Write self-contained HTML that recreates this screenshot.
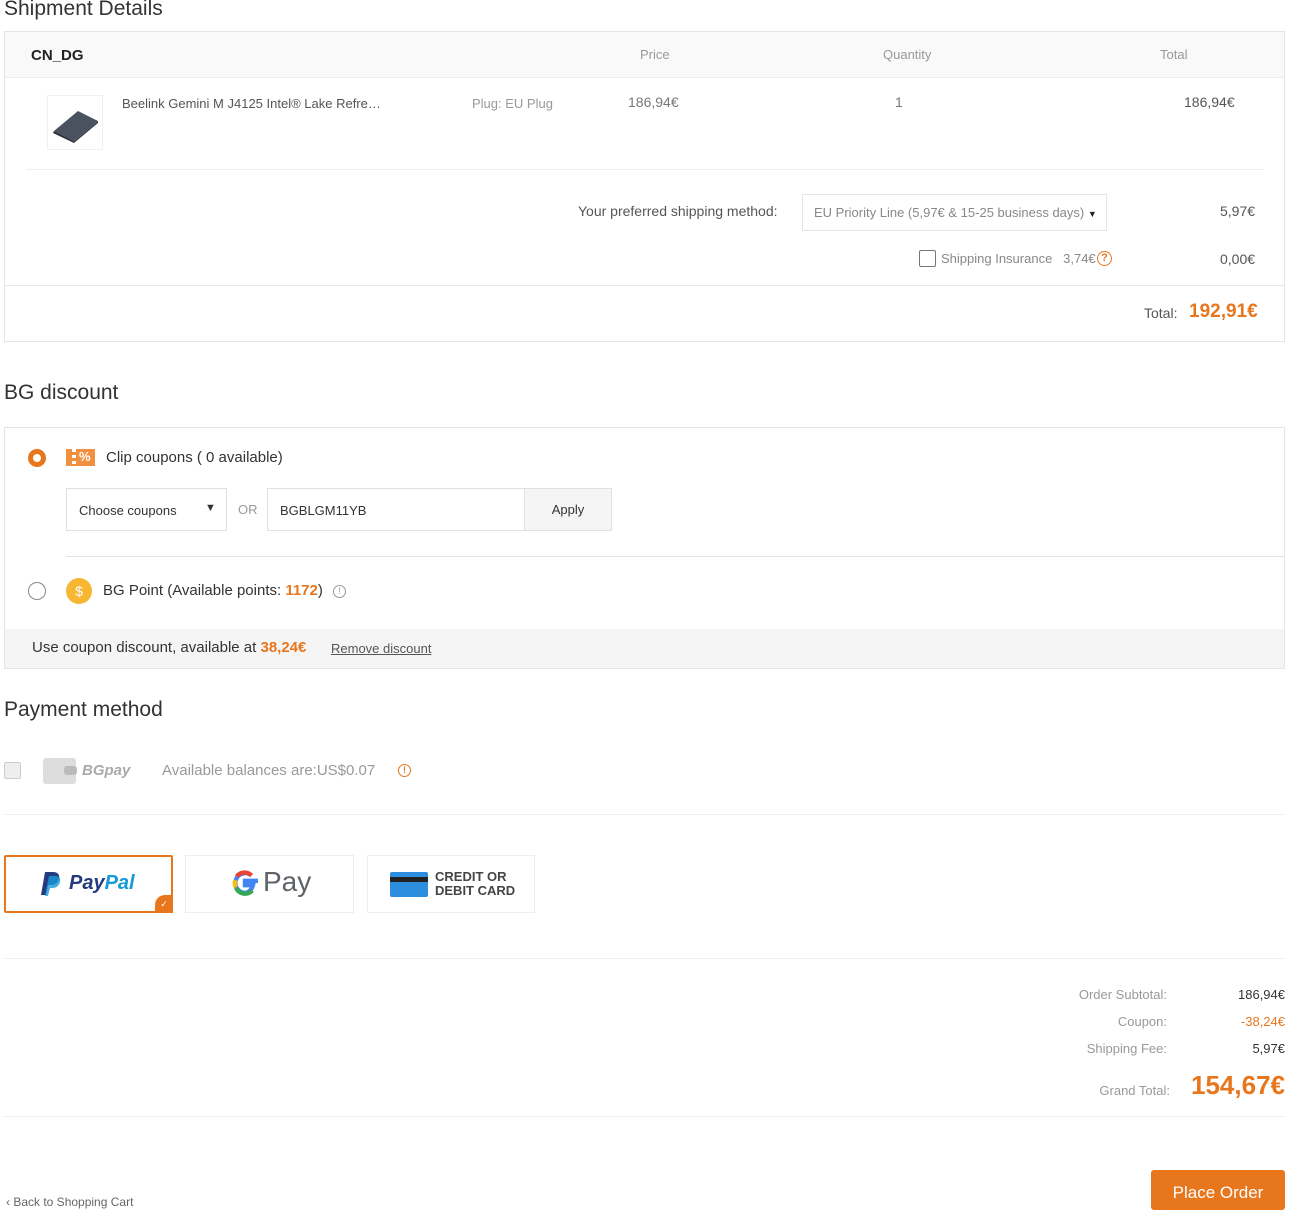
<!DOCTYPE html>
<html><head><meta charset="utf-8"><style>
*{box-sizing:border-box;margin:0;padding:0}
body{width:1301px;height:1200px;overflow:hidden;background:#fff;font-family:"Liberation Sans",Arial,sans-serif;color:#333;position:relative}
.a{position:absolute;white-space:nowrap}
.or{color:#e8761c}
.g{color:#999}
</style></head><body>
<div class="a" style="left:4px;top:-3px;font-size:21px;color:#333">Shipment Details</div>
<div class="a" style="left:4px;top:31px;width:1281px;height:311px;border:1px solid #e5e5e5"></div>
<div class="a" style="left:5px;top:32px;width:1279px;height:46px;background:#f9f9f9;border-bottom:1px solid #eee"></div>
<div class="a" style="left:31px;top:47px;font-size:15px;font-weight:bold;color:#222">CN_DG</div>
<div class="a g" style="left:640px;top:47px;font-size:13px">Price</div>
<div class="a g" style="left:883px;top:47px;font-size:13px">Quantity</div>
<div class="a g" style="left:1160px;top:47px;font-size:13px">Total</div>
<div class="a" style="left:47px;top:95px;width:56px;height:55px;border:1px solid #f0f0f0"></div>
<svg class="a" style="left:50px;top:103px" width="50" height="40" viewBox="0 0 50 40"><polygon points="4,28 28,8 48,18 24,38" fill="#4a5260"/><polygon points="4,28 24,38 24,40 3,30" fill="#2c3038"/><polygon points="24,38 48,18 48,20 24,40" fill="#3a404a"/></svg>
<div class="a" style="left:122px;top:96px;font-size:13px;color:#555">Beelink Gemini M J4125 Intel® Lake Refre…</div>
<div class="a g" style="left:472px;top:96px;font-size:13px">Plug: EU Plug</div>
<div class="a" style="left:628px;top:94px;font-size:14px;color:#777">186,94€</div>
<div class="a" style="left:895px;top:94px;font-size:14px;color:#777">1</div>
<div class="a" style="left:1184px;top:94px;font-size:14px;color:#555">186,94€</div>
<div class="a" style="left:26px;top:169px;width:1238px;height:1px;background:#eee"></div>
<div class="a" style="left:578px;top:203px;font-size:14px;color:#555">Your preferred shipping method:</div>
<div class="a" style="left:802px;top:194px;width:305px;height:37px;border:1px solid #e5e5e5;font-size:13px;color:#888;padding:10px 0 0 11px">EU Priority Line (5,97€ &amp; 15-25 business days) <span style="color:#222;font-size:9px">▼</span></div>
<div class="a" style="left:1220px;top:203px;font-size:14px;color:#555">5,97€</div>
<div class="a" style="left:919px;top:250px;width:17px;height:17px;border:1px solid #777;border-radius:2px"></div>
<div class="a" style="left:941px;top:251px;font-size:13px;color:#888">Shipping Insurance&nbsp;&nbsp; 3,74€</div>
<div class="a" style="left:1097px;top:251px;width:15px;height:15px;border:1.5px solid #e8761c;border-radius:50%;color:#e8761c;font-size:11px;text-align:center;line-height:12px;font-weight:bold">?</div>
<div class="a" style="left:1220px;top:251px;font-size:14px;color:#555">0,00€</div>
<div class="a" style="left:5px;top:285px;width:1279px;height:1px;background:#e8e8e8"></div>
<div class="a" style="left:1144px;top:305px;font-size:14px;color:#555">Total:</div>
<div class="a or" style="left:1189px;top:301px;font-size:19px;font-weight:bold">192,91€</div>

<div class="a" style="left:4px;top:381px;font-size:21px;color:#333">BG discount</div>
<div class="a" style="left:4px;top:427px;width:1281px;height:242px;border:1px solid #e5e5e5"></div>
<div class="a" style="left:28px;top:449px;width:18px;height:18px;border:5px solid #e8761c;border-radius:50%"></div>
<div class="a" style="left:66px;top:449px;width:29px;height:17px;background:#f09040"></div>
<div class="a" style="left:72px;top:449px;width:4px;height:17px;background:repeating-linear-gradient(#fff 0 3px,#f09040 3px 6px)"></div>
<div class="a" style="left:79px;top:449px;font-size:13px;color:#fff;font-weight:bold">%</div>
<div class="a" style="left:106px;top:449px;font-size:15px;color:#333">Clip coupons ( 0 available)</div>
<div class="a" style="left:66px;top:488px;width:161px;height:43px;border:1px solid #e0e0e0;font-size:13px;color:#333;padding:14px 0 0 12px">Choose coupons<span style="position:absolute;left:138px;top:13px;font-size:11px">▼</span></div>
<div class="a g" style="left:238px;top:502px;font-size:13px">OR</div>
<div class="a" style="left:267px;top:488px;width:345px;height:43px;border:1px solid #e0e0e0;font-size:13px;color:#333;padding:14px 0 0 12px">BGBLGM11YB</div>
<div class="a" style="left:524px;top:489px;width:87px;height:41px;background:#f5f5f5;border-left:1px solid #e0e0e0;font-size:13px;text-align:center;line-height:42px;color:#333">Apply</div>
<div class="a" style="left:66px;top:556px;width:1218px;height:1px;background:#e5e5e5"></div>
<div class="a" style="left:28px;top:582px;width:18px;height:18px;border:1px solid #888;border-radius:50%"></div>
<div class="a" style="left:66px;top:578px;width:26px;height:26px;border-radius:50%;background:#f7b733;color:#fff;font-size:14px;text-align:center;line-height:26px">$</div>
<div class="a" style="left:103px;top:582px;font-size:15px;color:#333">BG Point (Available points: <span class="or" style="font-weight:bold">1172</span>)</div>
<div class="a" style="left:333px;top:585px;width:13px;height:13px;border:1px solid #999;border-radius:50%;font-size:9px;text-align:center;line-height:11px;color:#999">!</div>
<div class="a" style="left:5px;top:629px;width:1279px;height:39px;background:#f5f5f5"></div>
<div class="a" style="left:32px;top:639px;font-size:15px;color:#333">Use coupon discount, available at <span class="or" style="font-weight:bold">38,24€</span></div>
<div class="a" style="left:331px;top:641px;font-size:13px;color:#555;text-decoration:underline">Remove discount</div>

<div class="a" style="left:4px;top:698px;font-size:21px;color:#333">Payment method</div>
<div class="a" style="left:4px;top:762px;width:17px;height:17px;border:1px solid #ccc;background:#eee;border-radius:2px"></div>
<div class="a" style="left:43px;top:758px;width:33px;height:26px;background:#ddd;border-radius:3px"></div>
<div class="a" style="left:64px;top:766px;width:13px;height:9px;background:#bbb;border-radius:3px"></div>
<div class="a" style="left:82px;top:762px;font-size:15px;color:#aaa;font-weight:bold;font-style:italic">BGpay</div>
<div class="a" style="left:162px;top:762px;font-size:15px;color:#999">Available balances are:US$0.07</div>
<div class="a" style="left:398px;top:764px;width:13px;height:13px;border:1.5px solid #e8761c;border-radius:50%;font-size:9px;text-align:center;line-height:10px;color:#e8761c;font-weight:bold">!</div>
<div class="a" style="left:4px;top:814px;width:1281px;height:1px;background:#eee"></div>

<div class="a" style="left:4px;top:855px;width:169px;height:58px;border:2px solid #e8761c;border-radius:2px"></div>
<div class="a" style="left:155px;top:895px;width:18px;height:18px;background:#e8761c;border-radius:10px 0 0 0;color:#fff;font-size:9px;text-align:center;line-height:18px">✓</div>
<svg class="a" style="left:41px;top:871px" width="22" height="26" viewBox="0 0 22 26"><path d="M4 1h8c5 0 7 3 6 7s-4 6-8 6H7l-2 10H0z" fill="#253b80"/><path d="M8 5h6c4 0 6 2 5 6s-4 6-7 6h-3l-2 8H4z" fill="#179bd7" opacity=".8"/></svg>
<div class="a" style="left:69px;top:872px;font-size:20px;font-weight:bold;font-style:italic;color:#253b80">Pay<span style="color:#179bd7">Pal</span></div>
<div class="a" style="left:185px;top:855px;width:169px;height:58px;border:1px solid #eee"></div>
<svg class="a" style="left:232px;top:870px" width="26" height="26" viewBox="4 4 18 18"><path d="M22 11.5H13v3h5.5c-.8 3-3 5.3-5.5 5.3a6.8 6.8 0 1 1 4.5-12" fill="none" stroke="#4285f4" stroke-width="3"/><path d="M7.2 8.5A6.8 6.8 0 0 1 17.5 7.8" fill="none" stroke="#ea4335" stroke-width="3"/><path d="M6.3 11a6.8 6.8 0 0 0 .3 5" fill="none" stroke="#fbbc05" stroke-width="3"/><path d="M6.8 16.4A6.8 6.8 0 0 0 18 18.2" fill="none" stroke="#34a853" stroke-width="3"/></svg>
<div class="a" style="left:263px;top:866px;font-size:28px;color:#5f6368">Pay</div>
<div class="a" style="left:367px;top:855px;width:168px;height:58px;border:1px solid #eee"></div>
<div class="a" style="left:390px;top:872px;width:38px;height:25px;background:#2d8ee0;border-radius:2px"></div>
<div class="a" style="left:390px;top:877px;width:38px;height:5px;background:#222"></div>
<div class="a" style="left:435px;top:870px;font-size:13px;font-weight:bold;color:#444;line-height:14px">CREDIT OR<br>DEBIT CARD</div>
<div class="a" style="left:4px;top:958px;width:1281px;height:1px;background:#eee"></div>

<div class="a g" style="right:134px;top:987px;font-size:13px">Order Subtotal:</div>
<div class="a" style="right:16px;top:987px;font-size:13px;color:#333">186,94€</div>
<div class="a g" style="right:134px;top:1014px;font-size:13px">Coupon:</div>
<div class="a or" style="right:16px;top:1014px;font-size:13px">-38,24€</div>
<div class="a g" style="right:134px;top:1041px;font-size:13px">Shipping Fee:</div>
<div class="a" style="right:16px;top:1041px;font-size:13px;color:#333">5,97€</div>
<div class="a g" style="right:131px;top:1083px;font-size:13px">Grand Total:</div>
<div class="a or" style="right:16px;top:1070px;font-size:26px;font-weight:bold">154,67€</div>
<div class="a" style="left:4px;top:1116px;width:1281px;height:1px;background:#eee"></div>
<div class="a" style="left:1151px;top:1170px;width:134px;height:40px;background:#e8761c;border-radius:3px;color:#fff;font-size:17px;text-align:center;padding-top:13px">Place Order</div>
<div class="a" style="left:6px;top:1195px;font-size:12px;color:#666">‹ Back to Shopping Cart</div>
</body></html>
